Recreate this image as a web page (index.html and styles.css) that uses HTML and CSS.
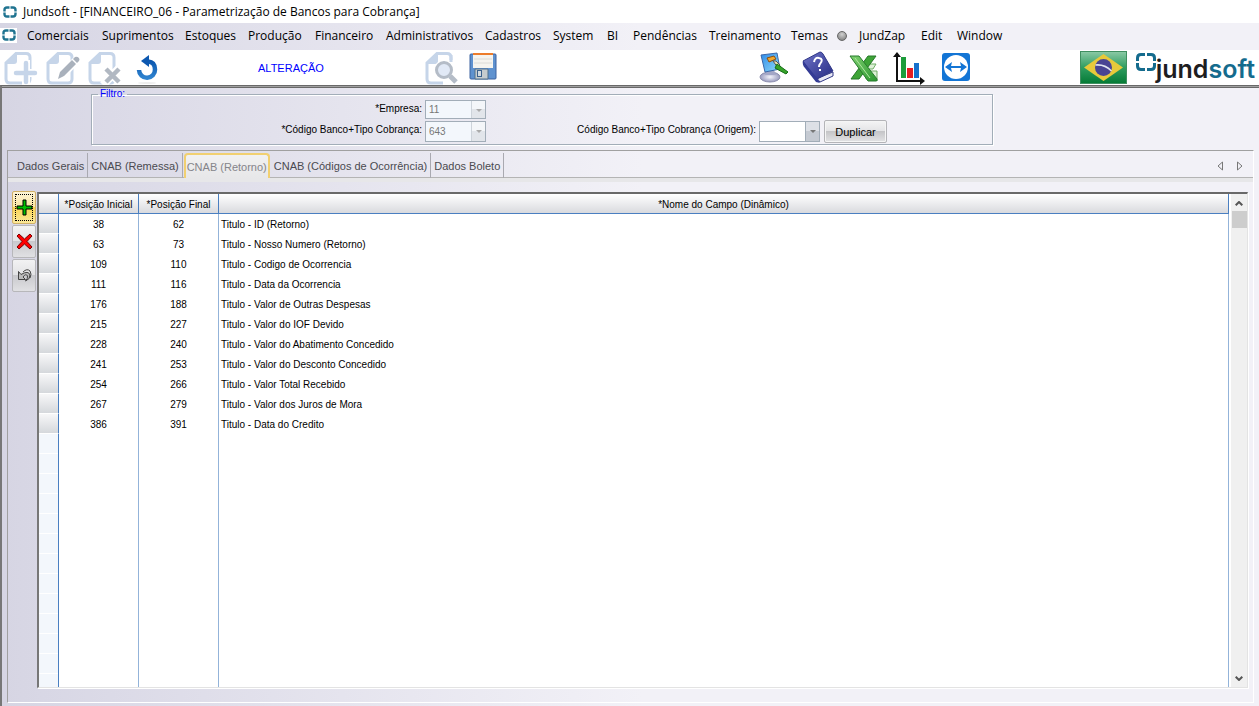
FILE: index.html
```html
<!DOCTYPE html>
<html lang="pt-BR">
<head>
<meta charset="utf-8">
<title>Jundsoft - [FINANCEIRO_06 - Parametrização de Bancos para Cobrança]</title>
<link rel="stylesheet" href="styles.css">
</head>
<body>
<svg class="defs" aria-hidden="true">
  <defs>
    <symbol id="ring" viewBox="0 0 14 12"><path d="M1.500 5.500V4Q1.500 1.500 4 1.500H6.500M7.500 1.500h2.500Q12.500 1.500 12.500 4V5.500M12.500 6.500v1.500Q12.500 10.500 10 10.500H7.500M6.500 10.500H4Q1.500 10.500 1.500 8V6.500" fill="none" stroke="#1f7390" stroke-width="2.400"/></symbol>
    <symbol id="page" viewBox="0 0 34 34"><path d="M12 2.500h10q4 0 4 4V28q0 4-4 4H6q-4 0-4-4V12z" fill="#fff" stroke="#c6d5e9" stroke-width="3"/><path d="M2 13L13 1v9q0 3-3 3z" fill="#c6d5e9"/></symbol>
    <linearGradient id="blue" x1="0" y1="0" x2="0" y2="1"><stop offset="0" stop-color="#0c58b0"/><stop offset="1" stop-color="#2f83cf"/></linearGradient>
    <linearGradient id="green" x1="0" y1="0" x2="0" y2="1"><stop offset="0" stop-color="#8ccaa6"/><stop offset=".5" stop-color="#2f9d60"/><stop offset="1" stop-color="#047a35"/></linearGradient>
    <linearGradient id="xgreen" x1="0" y1="0" x2="1" y2="1"><stop offset="0" stop-color="#7fd070"/><stop offset="1" stop-color="#2a962f"/></linearGradient>
    <linearGradient id="book" x1="0" y1="0" x2="1" y2="1"><stop offset="0" stop-color="#6f74c8"/><stop offset="1" stop-color="#252b83"/></linearGradient>
    <linearGradient id="screen" x1="0" y1="0" x2="1" y2="1"><stop offset="0" stop-color="#2f8ae6"/><stop offset="1" stop-color="#8fdcfb"/></linearGradient>
    <radialGradient id="base"><stop offset="0" stop-color="#f4f4fb"/><stop offset="1" stop-color="#9a9cbf"/></radialGradient>
  </defs>
</svg>

<header class="titlebar">
  <svg class="ring"><use href="#ring"/></svg>
  <h1>Jundsoft - [FINANCEIRO_06 - Parametrização de Bancos para Cobrança]</h1>
</header>

<nav class="menubar">
  <span class="menu-logo"><svg class="ring"><use href="#ring"/></svg></span>
  <button>Comerciais</button><button>Suprimentos</button><button>Estoques</button><button>Produção</button><button>Financeiro</button><button>Administrativos</button><button>Cadastros</button><button>System</button><button>BI</button><button>Pendências</button><button>Treinamento</button><button>Temas</button><button class="zap"><span class="dot"></span>JundZap</button><button>Edit</button><button>Window</button>
</nav>

<div class="toolbar">
  <div class="group records">
    <button aria-label="Novo"><svg viewBox="0 0 34 34"><use href="#page"/><path d="M22 9v25M10 22h24" stroke="#fff" stroke-width="8"/><path d="M22 12v19M12 22h19" stroke="#c6d5e9" stroke-width="4.500" stroke-linecap="round"/></svg></button>
    <button aria-label="Editar"><svg viewBox="0 0 34 34"><use href="#page"/><path d="M10 30l4-10L28 6l6 5-15 16z" fill="#fff"/><path d="M12 28l2-7L26 9l4 4-12 12zM27 8l2-2q2-1 4 1 1 2 0 3l-2 2z" fill="#a9b1bc"/></svg></button>
    <button aria-label="Excluir"><svg viewBox="0 0 34 34"><use href="#page"/><path d="M15 14l19 20M34 14L15 34" stroke="#fff" stroke-width="8"/><path d="M18 18l13 13M31 18L18 31" stroke="#b1b8c2" stroke-width="4.500"/></svg></button>
    <button aria-label="Desfazer"><svg viewBox="0 0 34 34"><ellipse cx="17" cy="32" rx="9" ry="1" fill="#eee"/><path d="M18 10.500Q25 11 25 18.500A8 8 0 0 1 9 19" fill="none" stroke="url(#blue)" stroke-width="4.500"/><path d="M19 4v12l-8-6z" fill="#0c58b0"/></svg></button>
  </div>
  <strong class="mode">ALTERAÇÃO</strong>
  <div class="group saving">
    <button aria-label="Pesquisar"><svg viewBox="0 0 34 34"><use href="#page"/><path d="M18 9h16v25H18z" fill="#fff"/><circle cx="19" cy="19" r="10" fill="#fff"/><path d="M26 4v7" stroke="#c6d5e9" stroke-width="3"/><path d="M25 25l6 6" stroke="#b4bcc7" stroke-width="5"/><circle cx="19" cy="19" r="7.500" fill="#e1e9f6" stroke="#b4bcc7" stroke-width="3"/></svg></button>
    <button aria-label="Salvar"><svg viewBox="0 0 34 34"><path d="M4 3h24q1 0 1 1v23q0 1-1 1H4q-1 0-1-1V4q0-1 1-1z" fill="#5f92cf" stroke="#3c62a0"/><path d="M6 2h20v2H6z" fill="#ed7d2b"/><path d="M6 4h20v13H6z" fill="#f5f4ef"/><path d="M7 8h18M7 12h18" stroke="#dcdcd8"/><path d="M8 18h13v10H8z" fill="#c6ccce" stroke="#50708c"/><path d="M10 19h5v7h-5z" fill="#3c628e"/><path d="M11 20h3v5h-3z" fill="#d2d9df"/></svg></button>
  </div>
  <div class="group apps">
    <button aria-label="Temas visuais"><svg viewBox="0 0 34 34"><ellipse cx="15" cy="26" rx="10" ry="5" fill="url(#base)" stroke="#8c8eae"/><path d="M11 19h8l2 5H10z" fill="#a4a7c7"/><path d="M6 4l16-2 3 16-15 3z" fill="url(#screen)" stroke="#3a67a8"/><path d="M12 7l7-2 2 3-7 3z" fill="#f0a72c" stroke="#8a4e12"/><path d="M18 10l3 0 4 4-2 3z" fill="#e9e1ae" stroke="#555"/><path d="M22 13l11 8-2 2-11-6z" fill="#36a329" stroke="#146d15"/></svg></button>
    <button aria-label="Ajuda"><svg viewBox="0 0 34 34"><path d="M2 11l17 20 13-6v-4L17 27z" fill="#e9e9f4" stroke="#323986"/><path d="M2 10L19 1q2 0 3 2l10 17-16 8q-3 0-4-3z" fill="url(#book)" stroke="#303787"/><path d="M2 10q-1 4 2 7l11 14 4 1-3-5z" fill="#333b95"/><path d="M13 11q1-5 5-4 5 1 1 6-1 1-1 3M19 18v2" fill="none" stroke="#fff" stroke-width="2"/></svg></button>
    <button aria-label="Excel"><svg viewBox="0 0 34 34"><path d="M18 13h11l-3 5h-8zM19 20h11v8H19z" fill="#dcf0d6" stroke="#70ad67"/><path d="M29 5h-8L4 28h8z" fill="#3ea437" stroke="#26782a"/><path d="M3 5h9l18 23q1 2-1 2h-8z" fill="url(#xgreen)" stroke="#277b2d"/><path d="M8 7l15 20" stroke="#b2e8a2"/></svg></button>
    <button aria-label="Gráficos"><svg viewBox="0 0 34 34"><path d="M4 2v28h26" fill="none" stroke="#111" stroke-width="2"/><path d="M0 6l4-5 4 5zM27 26l5 4-5 4z" fill="#111"/><path d="M8 6h5v21H8z" fill="#1c9c3a"/><path d="M14 17h6v10h-6z" fill="#e51e24"/><path d="M21 12h5v15h-5z" fill="#1570cc"/></svg></button>
    <button aria-label="Acesso remoto"><svg viewBox="0 0 34 34"><rect x="3" y="2" width="28" height="28" rx="3" fill="#1375d5"/><circle cx="17" cy="16" r="12" fill="#fff"/><path d="M6 16l7-5-1 4h10l-1-4 7 5-7 5 1-4H12l1 4z" fill="#1375d5"/></svg></button>
  </div>
  <div class="brand">
    <svg class="flag" viewBox="0 0 47 33" role="img" aria-label="Brasil"><rect x=".5" y=".5" width="46" height="32" fill="url(#green)" stroke="#3f8f60"/><path d="M4 16.500L23.500 3 43 16.500 23.500 30z" fill="#e7c93b"/><circle cx="23.500" cy="16.500" r="8.500" fill="#484493"/><path d="M15.500 14q9-1 16 6" fill="none" stroke="#dfe5ef" stroke-width="1.500"/></svg>
    <span class="wordmark"><svg class="wordmark-ring" viewBox="0 0 20 18"><path d="M1.500 8V5Q1.500 1.500 5 1.500H9M11 1.500h4Q18.500 1.500 18.500 5V8M18.500 10v3Q18.500 16.500 15 16.500H11M9 16.500H5Q1.500 16.500 1.500 13V10" fill="none" stroke="#146b8d" stroke-width="3"/></svg><b>jund<em>soft</em></b></span>
  </div>
</div>

<main class="form">
  <fieldset class="filter">
    <legend>Filtro:</legend>
    <label class="caption" for="empresa">*Empresa:</label>
    <span class="combo off"><select id="empresa" disabled><option>11</option></select><i></i></span>
    <label class="caption second" for="banco">*Código Banco+Tipo Cobrança:</label>
    <span class="combo off second tall"><select id="banco" disabled><option>643</option></select><i></i></span>
    <label class="caption second" for="origem">Código Banco+Tipo Cobrança (Origem):</label>
    <span class="combo second tall"><select id="origem"><option></option></select><i></i></span>
    <button class="duplicate second">Duplicar</button>
  </fieldset>

  <section class="panel">
    <div class="tabs" role="tablist">
      <button role="tab">Dados Gerais</button>
      <button role="tab">CNAB (Remessa)</button>
      <button role="tab" aria-selected="true" class="active">CNAB (Retorno)</button>
      <button role="tab">CNAB (Códigos de Ocorrência)</button>
      <button role="tab">Dados Boleto</button>
      <span class="pager">
        <button aria-label="Anterior"><svg viewBox="0 0 6 10"><path d="M5.500 1v8L1 5z"/></svg></button>
        <button aria-label="Próxima"><svg viewBox="0 0 6 10"><path d="M.5 1v8L5 5z"/></svg></button>
      </span>
    </div>
    <div class="work">
      <div class="row-tools">
        <button class="add" aria-label="Adicionar linha"><svg viewBox="0 0 17 17"><path d="M7 1h3v6h6v3h-6v6H7v-6H1V7h6z" fill="#00bf00" stroke="#000"/></svg></button>
        <button aria-label="Remover linha"><svg viewBox="0 0 17 17"><path d="M1 3l2-2 5.500 5L14 1l2 2-5 5.500 5 5.500-2 2-5.500-5L3 16l-2-2 5-5.500z" fill="#f00" stroke="#700"/></svg></button>
        <button aria-label="Desfazer linha"><svg viewBox="0 0 17 17"><path d="M2.500 4.500v8h7l-2.500-2.500q3-4 4.500-1 .5 2.500-2 5 5-2 4.500-6-1.500-5-9-.500z" fill="#bbb" stroke="#444"/><path d="M7 5q4-4 7-1 2 3 0 7" fill="none" stroke="#444"/></svg></button>
      </div>
      <div class="grid">
        <table>
          <colgroup><col class="c-sel"><col class="c-pos"><col class="c-pos"><col></colgroup>
          <thead><tr><th></th><th>*Posição Inicial</th><th>*Posição Final</th><th>*Nome do Campo (Dinâmico)</th></tr></thead>
          <tbody>
            <tr><td></td><td>38</td><td>62</td><td>Titulo - ID (Retorno)</td></tr>
            <tr><td></td><td>63</td><td>73</td><td>Titulo - Nosso Numero (Retorno)</td></tr>
            <tr><td></td><td>109</td><td>110</td><td>Titulo - Codigo de Ocorrencia</td></tr>
            <tr><td></td><td>111</td><td>116</td><td>Titulo - Data da Ocorrencia</td></tr>
            <tr><td></td><td>176</td><td>188</td><td>Titulo - Valor de Outras Despesas</td></tr>
            <tr><td></td><td>215</td><td>227</td><td>Titulo - Valor do IOF Devido</td></tr>
            <tr><td></td><td>228</td><td>240</td><td>Titulo - Valor do Abatimento Concedido</td></tr>
            <tr><td></td><td>241</td><td>253</td><td>Titulo - Valor do Desconto Concedido</td></tr>
            <tr><td></td><td>254</td><td>266</td><td>Titulo - Valor Total Recebido</td></tr>
            <tr><td></td><td>267</td><td>279</td><td>Titulo - Valor dos Juros de Mora</td></tr>
            <tr><td></td><td>386</td><td>391</td><td>Titulo - Data do Credito</td></tr>
            <tr class="filler"><td></td><td></td><td></td><td></td></tr>
          </tbody>
        </table>
        <div class="scroll">
          <svg viewBox="0 0 8 5"><path d="M.7 4.300L4 1l3.300 3.300"/></svg>
          <span class="thumb"></span>
          <svg viewBox="0 0 8 5"><path d="M.7 .7L4 4 7.300 .7"/></svg>
        </div>
      </div>
    </div>
  </section>
</main>
</body>
</html>
```

FILE: styles.css
```css
* { box-sizing: border-box; }
:root { --wash: linear-gradient(90deg, #d6d5e3 0, #d8d7e5 40px, #f2f1f7 640px); }
body {
  margin: 0;
  height: 100vh;
  display: flex;
  flex-direction: column;
  overflow: hidden;
  background: #fff;
  color: #000;
  font: 11px/14px "Liberation Sans", Arial, sans-serif;
}
button { padding: 0; border: 0; background: none; color: inherit; font: inherit; }
.defs { position: absolute; width: 0; height: 0; }
.ring { width: 14px; height: 12px; flex: none; }

.titlebar { display: flex; align-items: center; gap: 6px; height: 23px; padding-left: 3px; }
.titlebar h1 { margin: 0; font: 12px/16px "Open Sans", "Noto Sans", sans-serif; white-space: nowrap; }

.menubar {
  display: grid;
  grid-template-columns: 27px 75px 83px 63px 67px 71px 99px 68px 54px 26px 76px 82px 46px 84px 36px 60px;
  align-items: center;
  height: 27px;
  padding-bottom: 2px;
  background: var(--wash);
  font: 12px/16px "Open Sans", "Noto Sans", sans-serif;
}
.menubar button { text-align: left; white-space: nowrap; }
.menu-logo { display: flex; width: 17px; padding: 1px 2px 2px; background: #fff; }
.zap { display: flex; align-items: center; gap: 12px; }
.dot { width: 10px; height: 10px; border: 1px solid #666; border-radius: 50%; background: radial-gradient(circle at 50% 30%, #d0d0d0, #777); }

.toolbar { display: flex; align-items: center; height: 35px; padding: 0 4px; }
.toolbar svg { display: block; }
.group { display: flex; }
.group button, .group svg { width: 34px; height: 34px; }
.records { gap: 8px; }
.mode { width: 90px; margin-left: 94px; color: #00f; font-size: 11px; font-weight: 400; }
.saving { gap: 8px; margin-left: 77px; }
.apps { gap: 12px; margin-left: 254px; }
.brand { display: flex; align-items: center; gap: 9px; margin-left: auto; }
.flag { width: 47px; height: 33px; }
.wordmark { display: flex; align-items: flex-start; height: 34px; }
.wordmark-ring { width: 20px; height: 18px; margin-top: 2px; }
.wordmark b { color: #1d1d1f; font: 600 25px/36px Inter, "Open Sans", sans-serif; }
.wordmark em { color: #146b8d; font-style: normal; }

.form {
  flex: 1;
  display: flex;
  flex-direction: column;
  min-height: 0;
  padding: 2px 5px 3px 6px;
  border: solid #696969;
  border-width: 1px 0 0 2px;
  border-left-color: #777;
  box-shadow: inset 0 1px #a0a0a0, inset 0 2px #696969;
  background: var(--wash);
}
.filter {
  display: grid;
  grid-template-columns: 333px 138px 196px 65px 1fr;
  grid-template-rows: 21px 22px;
  width: 902px;
  max-width: 100%;
  height: 57px;
  margin: 0 0 0 83px;
  padding: 0;
  border: 1px solid #a2adb8;
  box-shadow: inset 1px 1px #fff, 1px 1px #fff;
  font-size: 10px;
}
.filter legend { height: 12px; margin-left: 6px; padding: 0 2px; color: #00f; line-height: 12px; }
.caption { grid-column: 1; padding: 2px 3px 0 0; text-align: right; white-space: nowrap; }
.second { grid-row: 2; }
label[for="origem"] { grid-column: 3; }
.combo { grid-column: 2; position: relative; width: 61px; height: 19px; }
.combo.tall { height: 21px; }
.combo:has(#origem) { grid-column: 4; }
.combo select {
  width: 100%; height: 100%; padding: 0 16px 0 3px;
  appearance: none; border: 1px solid #a2adb8; border-radius: 0;
  background: #fff; color: #000; font: 10px/14px "Liberation Sans", Arial, sans-serif;
}
.combo.off select { background: #f3f7fc; color: #777; opacity: 1; }
.combo i {
  position: absolute; top: 1px; right: 1px; bottom: 1px; width: 14px;
  border-left: 1px solid #a2adb8;
  background: linear-gradient(#dde0e6 50%, #c5cad2 50%);
  pointer-events: none;
}
.combo.off i { background: linear-gradient(#f4f6f9 50%, #e2e5ea 50%); border-color: #cdd3da; }
.combo i::after { content: ""; position: absolute; left: 4px; top: 8px; border: solid transparent; border-width: 3px 3px 0; border-top-color: #777; }
.combo.off i::after { border-top-color: #aaa; }
.duplicate {
  grid-column: 5; width: 63px; height: 23px; margin-top: -1px;
  border: 1px solid #b4b4b8; border-radius: 2px;
  box-shadow: inset 0 0 0 1px #f5f5f5;
  background: linear-gradient(#f4f4f5, #e3e3e5 50%, #c5c5c8 50%, #e3e3e5);
  font-size: 11px;
}

.panel {
  flex: 1; display: flex; flex-direction: column; min-height: 0;
  margin: 5px 0 0 -1px;
  border: 1px solid #a0a0a0; border-right-color: #fff; border-bottom-color: #fff;
}
.tabs {
  display: flex; align-items: stretch; height: 31px; padding: 2px 10px 0 0;
  border-bottom: 4px solid #e7e7e9;
  background: linear-gradient(#b4b4b4, #b4b4b4) 0 100% / 100% 1px no-repeat;
  color: #4a4a50;
}
.tabs > button { padding: 0 3px; border-right: 1px solid #a9a9b0; white-space: nowrap; }
.tabs > button:first-child { padding-left: 9px; }
.tabs > .active {
  margin: 0 1px; padding: 0 1px;
  border: 2px solid #f1d071; border-bottom: 0; border-radius: 4px 4px 0 0;
  background: linear-gradient(#f1f1f1, #e7e7e9); color: #85858a;
}
.pager { display: flex; align-items: center; gap: 14px; margin-left: auto; }
.pager svg { display: block; width: 6px; height: 10px; fill: none; stroke: #777; }

.work { flex: 1; display: flex; gap: 1px; min-height: 0; padding: 10px 5px 14px 4px; }
.row-tools { display: flex; flex-direction: column; gap: 1px; width: 24px; margin-top: -1px; }
.row-tools button {
  display: flex; align-items: center; justify-content: center; height: 33px;
  border: 1px solid #b7b7ba; border-radius: 2px;
  background: linear-gradient(#f2f2f3, #e2e2e4 50%, #c9c9cd 50%, #e0e0e3);
}
.row-tools button.add { outline: 1px dotted #000; outline-offset: -4px; border-color: #d0b066; background: linear-gradient(#fdf4d6, #fbe6a0 50%, #f9d452 50%, #fbe89a); }
.row-tools svg { width: 17px; height: 17px; }

.grid {
  flex: 1; display: flex; min-width: 0;
  border: 2px solid #696969; border-width: 2px 1px 1px 2px;
  border-left-color: #777; border-right-color: #e3e3e3; border-bottom-color: #e3e3e3;
  box-shadow: 1px 1px #fff;
  background: #fff;
}
table { flex: 1; width: 100%; height: 100%; table-layout: fixed; border-spacing: 0; font-size: 10px; line-height: 12px; }
.c-sel { width: 20px; }
.c-pos { width: 80px; }
th { height: 20px; padding: 2px 0 0; border: solid #4a7fc1; border-width: 0 1px 1px 0; background: linear-gradient(#fff, #d9dade); font-weight: 400; }
td { height: 20px; padding: 2px 2px 0; border-right: 1px solid #93b3d9; text-align: center; }
td:first-child { border-right-color: #4a7fc1; border-bottom: 1px solid #fff; background: linear-gradient(#f7f7f8, #d5d8dc); }
td:last-child { text-align: left; }
.filler td { height: auto; }
.filler td:first-child { background: repeating-linear-gradient(#f3f7fc 0 19px, #fff 19px 20px); border-bottom: 0; }
.scroll { display: flex; flex-direction: column; align-items: center; width: 16px; margin-left: 2px; padding: 7px 0 6px; background: #f0f0f0; }
.scroll svg { width: 8px; height: 5px; fill: none; stroke: #555; stroke-width: 2; }
.thumb { width: 15px; height: 17px; margin: 5px 0 auto; background: #cdcdcd; }
```
